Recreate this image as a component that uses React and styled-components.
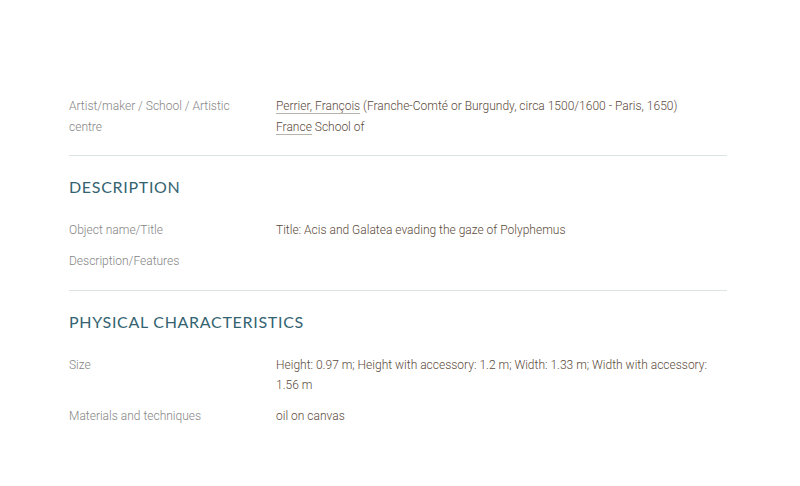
import React from 'react';
import styled, { createGlobalStyle } from 'styled-components';

const GlobalStyle = createGlobalStyle`
    body {
        margin: 0;
        background: #fff;
        font-family: Roboto, "Liberation Sans", sans-serif;
    }
`;

const Page = styled.main`
    padding: 96px 73px 40px 69px;
`;

const Section = styled.section`
    display: flex;
    flex-direction: column;
    gap: 11px;
    padding: 19px 0 19px;
    border-bottom: 1px solid #dde4e6;

    &:first-child {
        padding-top: 0;
        padding-bottom: 17px;
    }
    &:last-child {
        border-bottom: none;
    }
`;

const Heading = styled.h2`
    margin: 0 0 10px;
    font-family: Lato, "Open Sans", sans-serif;
    font-size: 16px;
    font-weight: 400;
    line-height: 24px;
    letter-spacing: 0.7px;
    text-transform: uppercase;
    color: #336371;
`;

const Row = styled.div`
    display: grid;
    grid-template-columns: 207px 1fr;
    font-size: 12px;
    font-weight: 300;
    line-height: ${p => (p.$loose ? '21px' : '20px')};
`;

const Label = styled.div`
    color: #858585;
    padding-right: 30px;
`;

const Value = styled.div`
    color: #5b4a3b;
`;

const Ref = styled.a`
    color: inherit;
    text-decoration: none;
    border-bottom: 1px solid #b9b2aa;
`;

const rows = {
    description: [
        ['Object name/Title', 'Title: Acis and Galatea evading the gaze of Polyphemus'],
        ['Description/Features', ''],
    ],
    physical: [
        ['Size', 'Height: 0.97 m; Height with accessory: 1.2 m; Width: 1.33 m; Width with accessory: 1.56 m'],
        ['Materials and techniques', 'oil on canvas'],
    ],
};

function App() {
    return (
        <>
            <GlobalStyle />
            <Page>
                <Section>
                    <Row $loose>
                        <Label>Artist/maker / School / Artistic centre</Label>
                        <Value>
                            <Ref href="#">Perrier, François</Ref> (Franche-Comté or Burgundy, circa 1500/1600 - Paris, 1650)
                            <br />
                            <Ref href="#">France</Ref> School of
                        </Value>
                    </Row>
                </Section>
                <Section>
                    <Heading>Description</Heading>
                    {rows.description.map(([label, value], i) => (
                        <Row key={i}>
                            <Label>{label}</Label>
                            <Value>{value}</Value>
                        </Row>
                    ))}
                </Section>
                <Section>
                    <Heading>Physical characteristics</Heading>
                    {rows.physical.map(([label, value], i) => (
                        <Row key={i}>
                            <Label>{label}</Label>
                            <Value>{value}</Value>
                        </Row>
                    ))}
                </Section>
            </Page>
        </>
    );
}

export default App;
